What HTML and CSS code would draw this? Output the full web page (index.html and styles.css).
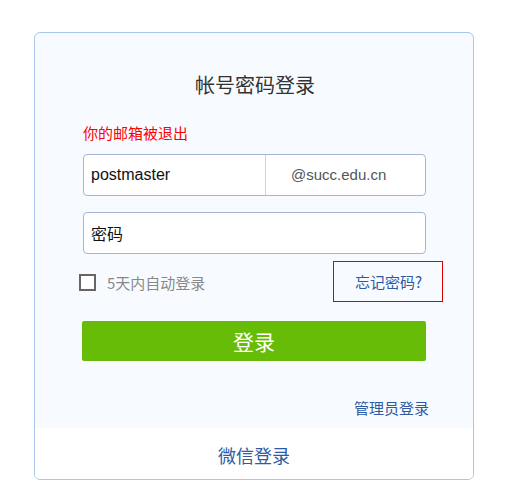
FILE: index.html
```html
<!DOCTYPE html>
<html lang="zh-CN">
<head>
<meta charset="utf-8">
<title>帐号密码登录</title>
<link rel="stylesheet" href="styles.css">
</head>
<body>
<div class="page">
  <div class="card">
    <div class="main">
      <h1 class="title">帐号密码登录</h1>
      <div class="msg">你的邮箱被退出</div>
      <div class="field field-user">
        <div class="user">postmaster</div>
        <div class="domain">@succ.edu.cn</div>
      </div>
      <div class="field field-pass">
        <div class="pass">密码</div>
      </div>
      <div class="row">
        <label class="remember"><span class="box"></span><span class="remember-text">5天内自动登录</span></label>
        <a class="forgot">忘记密码?</a>
      </div>
      <button class="login">登录</button>
      <div class="admin-row"><a class="admin">管理员登录</a></div>
    </div>
    <div class="wechat"><a class="wechat-link">微信登录</a></div>
  </div>
</div>
</body>
</html>
```
FILE: styles.css
```css
html, body {
  margin: 0;
  padding: 0;
  background: #ffffff;
}
body {
  font-family: "Liberation Sans", "Noto Sans CJK SC", sans-serif;
}
.page {
  padding: 32px 0 0 34px;
}
.card {
  width: 438px;
  height: 446px;
  border: 1px solid #a9c7ec;
  border-radius: 6px;
  background: #f7fbff;
  overflow: hidden;
  display: flex;
  flex-direction: column;
}
.main {
  padding: 40px 46px 0 47px;
  display: flex;
  flex-direction: column;
  flex: 1;
}
.title {
  margin: 0;
  font-weight: normal;
  font-size: 20px;
  line-height: 24px;
  height: 24px;
  text-align: center;
  color: #333333;
  font-family: "Noto Sans CJK SC", sans-serif;
  padding-left: 1px;
}
.msg {
  margin-top: 26px;
  font-size: 15px;
  line-height: 20px;
  color: #ff0000;
  font-family: "Noto Sans CJK SC", sans-serif;
  padding-left: 1px;
}
.field {
  height: 40px;
  border: 1px solid #a6b5d2;
  border-radius: 4px;
  background: #ffffff;
  display: flex;
  align-items: center;
  box-sizing: content-box;
  width: 341px;
  margin-left: 1px;
}
.field-user {
  margin-top: 11px;
}
.field-pass {
  margin-top: 16px;
}
.user {
  padding-left: 7px;
  height: 40px;
  line-height: 40px;
  font-size: 16px;
  color: #111111;
  border-right: 1px solid #c9d3e8;
  box-sizing: border-box;
  width: 182px;
}
.domain {
  flex: 1;
  text-align: left;
  padding-left: 25px;
  font-size: 15px;
  line-height: 40px;
  color: #555555;
}
.pass {
  padding-left: 7px;
  font-size: 16px;
  line-height: 40px;
  color: #111111;
  font-family: "Noto Sans CJK SC", sans-serif;
}
.row {
  margin-top: 7px;
  height: 41px;
  display: flex;
  align-items: center;
  justify-content: space-between;
  margin-left: -3px;
  margin-right: -16px;
}
.remember {
  display: flex;
  align-items: center;
  margin-top: 2px;
}
.box {
  width: 13px;
  height: 13px;
  border: 2px solid #666666;
  background: #ffffff;
  display: inline-block;
}
.remember-text {
  margin-left: 11px;
  font-size: 15px;
  color: #888888;
  font-family: "Noto Sans CJK SC", sans-serif;
}
.forgot {
  width: 107px;
  height: 39px;
  border: 1px solid #e00000;
  display: flex;
  align-items: center;
  justify-content: center;
  font-size: 15px;
  color: #2d5aa3;
  font-family: "Noto Sans CJK SC", sans-serif;
  padding-left: 1px;
}
.login {
  margin-top: 19px;
  width: 344px;
  height: 40px;
  border: none;
  border-radius: 2px;
  background: #66bc06;
  color: #ffffff;
  font-size: 21px;
  font-family: "Noto Sans CJK SC", sans-serif;
  padding: 0;
  cursor: pointer;
}
.admin-row {
  margin-top: 36px;
  display: flex;
  justify-content: flex-end;
  margin-right: -2px;
}
.admin {
  font-size: 15px;
  line-height: 22px;
  color: #2d5aa3;
  font-family: "Noto Sans CJK SC", sans-serif;
}
.wechat {
  height: 51px;
  background: #ffffff;
  display: flex;
  align-items: center;
  justify-content: center;
}
.wechat-link {
  font-size: 18px;
  color: #2d5aa3;
  font-family: "Noto Sans CJK SC", sans-serif;
  margin-top: 2px;
}
```
